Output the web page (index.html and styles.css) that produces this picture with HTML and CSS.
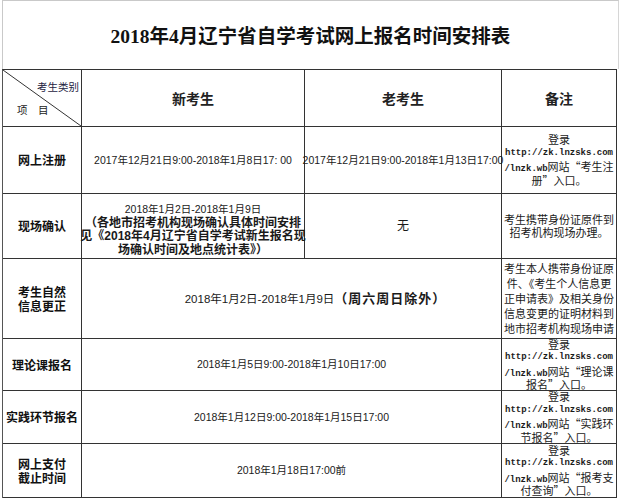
FILE: index.html
```html
<!DOCTYPE html>
<html lang="zh-CN">
<head>
<meta charset="utf-8">
<title>2018年4月辽宁省自学考试网上报名时间安排表</title>
<link rel="stylesheet" href="styles.css">
</head>
<body>
<div class="sheet">
  <div class="title"><h1>2018年4月辽宁省自学考试网上报名时间安排表</h1></div>
  <div class="grid">
    <div class="cell diag">
      <svg class="diag-line" viewBox="0 0 100 100" preserveAspectRatio="none"><line x1="0" y1="0" x2="100" y2="100" vector-effect="non-scaling-stroke"/></svg>
      <span class="diag-top">考生类别</span>
      <span class="diag-bottom">项　目</span>
    </div>
    <div class="cell head"><div class="txt">新考生</div></div>
    <div class="cell head"><div class="txt">老考生</div></div>
    <div class="cell head"><div class="txt">备注</div></div>

    <div class="cell label"><div class="txt">网上注册</div></div>
    <div class="cell data"><div class="txt">2017年12月21日9:00-2018年1月8日17: 00</div></div>
    <div class="cell data"><div class="txt">2017年12月21日9:00-2018年1月13日17:00</div></div>
    <div class="cell note"><div class="txt"><span class="ln">登录</span><span class="ln url">http://zk.lnzsks.com</span><span class="ln"><span class="url">/lnzk.wb</span>网站“考生注</span><span class="ln">册”入口。</span></div></div>

    <div class="cell label"><div class="txt">现场确认</div></div>
    <div class="cell data wrap"><div class="txt">2018年1月2日-2018年1月9日<br><b>（各地市招考机构现场确认具体时间安排<br>见《2018年4月辽宁省自学考试新生报名现<br>场确认时间及地点统计表》）</b></div></div>
    <div class="cell data plain"><div class="txt">无</div></div>
    <div class="cell note"><div class="txt"><span class="ln">考生携带身份证原件到</span><span class="ln">招考机构现场办理。</span></div></div>

    <div class="cell label"><div class="txt">考生自然<br>信息更正</div></div>
    <div class="cell data merged shift"><div class="txt">2018年1月2日-2018年1月9日<b>（周六周日除外）</b></div></div>
    <div class="cell note tall"><div class="txt"><span class="ln">考生本人携带身份证原</span><span class="ln">件、《考生个人信息更</span><span class="ln">正申请表》及相关身份</span><span class="ln">信息变更的证明材料到</span><span class="ln">地市招考机构现场申请</span></div></div>

    <div class="cell label"><div class="txt">理论课报名</div></div>
    <div class="cell data merged"><div class="txt">2018年1月5日9:00-2018年1月10日17:00</div></div>
    <div class="cell note"><div class="txt"><span class="ln">登录</span><span class="ln url">http://zk.lnzsks.com</span><span class="ln"><span class="url">/lnzk.wb</span>网站“理论课</span><span class="ln">报名”入口。</span></div></div>

    <div class="cell label"><div class="txt">实践环节报名</div></div>
    <div class="cell data merged"><div class="txt">2018年1月12日9:00-2018年1月15日17:00</div></div>
    <div class="cell note"><div class="txt"><span class="ln">登录</span><span class="ln url">http://zk.lnzsks.com</span><span class="ln"><span class="url">/lnzk.wb</span>网站“实践环</span><span class="ln">节报名”入口。</span></div></div>

    <div class="cell label"><div class="txt">网上支付<br>截止时间</div></div>
    <div class="cell data merged"><div class="txt">2018年1月18日17:00前</div></div>
    <div class="cell note"><div class="txt"><span class="ln">登录</span><span class="ln url">http://zk.lnzsks.com</span><span class="ln"><span class="url">/lnzk.wb</span>网站“报考支</span><span class="ln">付查询”入口。</span></div></div>
  </div>
</div>
</body>
</html>
```

FILE: styles.css
```css
html, body {
  margin: 0;
  padding: 0;
  background: #ffffff;
}

body {
  font-family: "Liberation Sans", "Noto Sans CJK SC", sans-serif;
  color: #1a1a1a;
}

.sheet {
  width: 621px;
  height: 500px;
  overflow: hidden;
}

.title {
  box-sizing: border-box;
  height: 69px;
  margin-left: 2px;
  width: 617px;
  border-top: 1px solid #c9c9c9;
  border-left: 1px solid #c9c9c9;
  border-right: 1px solid #d6d6d6;
  padding-top: 4px;
  display: flex;
  align-items: center;
  justify-content: center;
}

.title h1 {
  margin: 0;
  font-family: "Liberation Serif", "Noto Sans CJK SC", serif;
  font-size: 19.5px;
  font-weight: bold;
  color: #111;
  line-height: 24px;
}

.grid {
  margin-left: 2px;
  display: grid;
  grid-template-columns: 79px 223px 197px 115px;
  grid-template-rows: 57px 67px 65px 80px 52px 53px 54px;
  width: fit-content;
  border-top: 1px solid #333;
  border-left: 1px solid #555;
}

.cell {
  box-sizing: border-box;
  border-right: 1px solid #333;
  border-bottom: 1px solid #333;
  display: flex;
  align-items: center;
  justify-content: center;
  text-align: center;
  white-space: nowrap;
  min-width: 0;
}

.txt {
  text-align: center;
  white-space: nowrap;
}

.diag {
  position: relative;
  flex-direction: column;
  align-items: stretch;
  justify-content: space-between;
  padding: 11px 2px 10px 14px;
  font-family: "Noto Sans CJK SC", sans-serif;
  font-size: 10.5px;
  line-height: 12px;
}

.diag-line {
  position: absolute;
  left: 0;
  top: 0;
  width: 100%;
  height: 100%;
}

.diag-line line {
  stroke: #333;
  stroke-width: 1;
}

.diag-top {
  text-align: right;
  color: #1d2240;
}

.diag-bottom {
  text-align: left;
}

.head {
  font-family: "Noto Sans CJK SC", sans-serif;
  font-size: 14px;
  font-weight: bold;
  color: #222;
}

.label {
  font-family: "Noto Sans CJK SC", sans-serif;
  font-size: 12px;
  font-weight: bold;
  line-height: 14px;
  color: #111;
}

.data {
  font-size: 10.5px;
  line-height: 13px;
}

.data b {
  font-weight: bold;
}

.wrap .txt {
  line-height: 13.5px;
  padding-top: 8px;
}

.wrap b {
  font-size: 12px;
}

.plain {
  font-size: 12px;
}

.merged {
  grid-column: span 2;
}

.shift {
  padding-left: 48px;
  font-size: 11.5px;
}

.shift b {
  font-size: 13px;
  letter-spacing: 1px;
}

.note {
  font-family: "Noto Sans CJK SC", sans-serif;
  font-size: 11px;
  padding: 0 1px;
}

.ln {
  display: block;
  height: 13.5px;
  line-height: 13.5px;
  overflow: visible;
}

.tall .ln {
  height: 15px;
  line-height: 15px;
}

.url {
  font-family: "Liberation Mono", monospace;
  font-size: 9px;
  font-weight: bold;
}
```
